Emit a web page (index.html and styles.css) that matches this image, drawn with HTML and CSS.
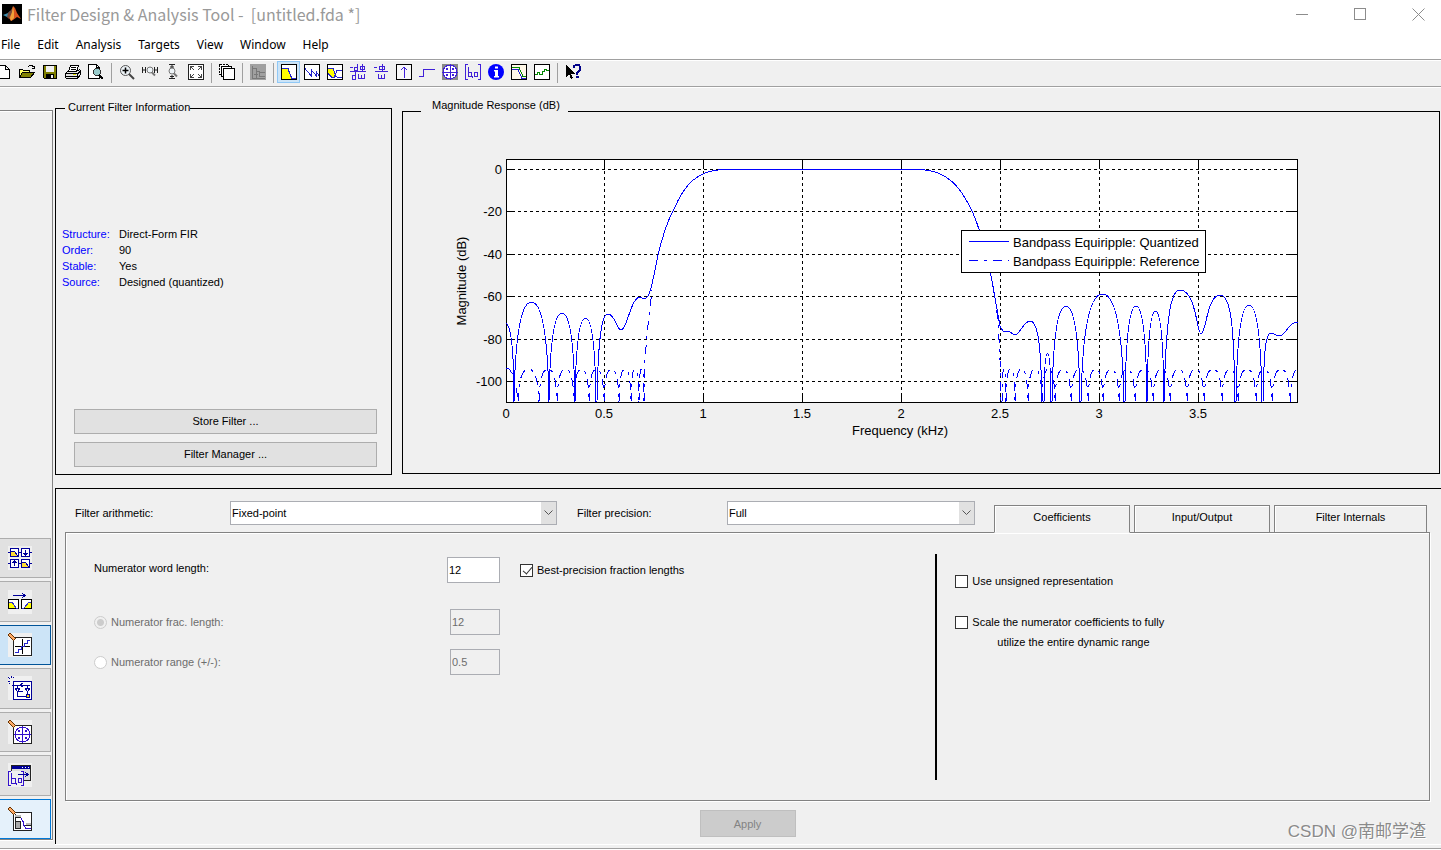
FILE: index.html
```html
<!DOCTYPE html>
<html lang="en">
<head>
<meta charset="utf-8">
<title>Filter Design &amp; Analysis Tool</title>
<link rel="stylesheet" href="styles.css">
</head>
<body>
<div class="app">
  <header class="titlebar">
    <svg class="logo" viewBox="0 0 20 20" aria-hidden="true">
      <rect width="20" height="20" fill="#000"/>
      <path d="M1 11 6 9 8 7 10 9 7 14 5 13z" fill="#3f8fb0"/>
      <path d="M6 9 9 6 11 3 11 9 7 15 5 13z" fill="#7a4a3a"/>
      <path d="M11 2 13 4 15 9 19 15 15 13 11 16 9 17 7 14 10 9z" fill="#d9531e"/>
      <path d="M11 2 12 8 12 14 9 17 8 14 10 8z" fill="#f0a23a"/>
    </svg>
    <h1 class="title">Filter Design &amp; Analysis Tool -&nbsp; [untitled.fda *]</h1>
    <div class="winbtns">
      <button class="winbtn" aria-label="Minimize"><svg viewBox="0 0 13 13"><path d="M0 6.500h12"/></svg></button>
      <button class="winbtn" aria-label="Maximize"><svg viewBox="0 0 13 13"><path d="M.5 .5h11v11H.5z"/></svg></button>
      <button class="winbtn smooth" aria-label="Close"><svg viewBox="0 0 13 13"><path d="M.5 .5l12 12M12.500 .5l-12 12"/></svg></button>
    </div>
  </header>
  <nav class="menubar">
    <button>File</button><button>Edit</button><button>Analysis</button><button>Targets</button><button>View</button><button>Window</button><button>Help</button>
  </nav>
  <div class="toolbar" role="toolbar" aria-label="Tools">
    <button class="tool" aria-label="New"><svg viewBox="0 0 16 16"><path d="M2.500 1.500h7l4 4v9h-11zM9.500 1.500v4h4" fill="#fff" stroke="#000"/></svg></button>
    <button class="tool" aria-label="Open"><svg viewBox="0 0 16 16"><path d="M.5 13.500v-8h3l1 1h6v2" fill="#ff6" stroke="#000"/><path d="M.5 13.500l3-5h12l-4 5z" fill="#808000" stroke="#000"/><path d="M8.500 3.500l2-2h3l1 2M12.500 4.500h3v-3" fill="none" stroke="#000"/></svg></button>
    <button class="tool" aria-label="Save"><svg viewBox="0 0 16 16"><path d="M1.500 1.500h13v13h-12l-1-1z" fill="#808000" stroke="#000"/><path d="M4 2h8v6H4z" fill="#f0f0f0"/><path d="M4 10h8v5H4z"/><path d="M9 11h2v3H9z" fill="#f0f0f0"/></svg></button>
    <button class="tool" aria-label="Print"><svg viewBox="0 0 16 16"><path d="M3.500 7.500l2-6h8l-2 6" fill="#fff" stroke="#000"/><path d="M6 3.500h5M6 5.500h5" stroke="#000"/><path d="M.5 9.500l2-2h9l3-2 1 1v4l-3 4h-11l-1-1z" fill="#e4e4e4" stroke="#000"/><path d="M1 9.500h11M1 12.500h11M12.500 14v-4l3-3" fill="none" stroke="#000"/><path d="M8 10h3v1H8z" fill="#dd0"/></svg></button>
    <button class="tool" aria-label="Print preview"><svg viewBox="0 0 16 16"><path d="M.5 .5h8l3 3v11H.5z" fill="#fff" stroke="#000"/><path d="M8.500 .5v3h3" fill="none" stroke="#000"/><circle cx="9" cy="8" r="3.500" fill="#9cc" stroke="#333"/><path d="M11 11l4 4" stroke="#000" stroke-width="2"/></svg></button>
    <span class="sep"></span>
    <button class="tool" aria-label="Zoom in"><svg class="soft" viewBox="0 0 16 16"><circle cx="6.500" cy="6.500" r="5" fill="#eef4f8" stroke="#555"/><path d="M6.500 3.500v6M3.500 6.500h6" stroke="#000" stroke-width="1.500"/><path d="M10 10l5 5" stroke="#444" stroke-width="2"/></svg></button>
    <button class="tool" aria-label="Zoom X"><svg class="soft" viewBox="0 0 16 16"><path d="M.5 3v6M3.500 3v6M.5 6h3M12.500 3v6M15.500 3v6M12.500 6h3" stroke="#222"/><circle cx="8" cy="6" r="3" fill="#eef4f8" stroke="#777"/><path d="M10 8.500l3 3" stroke="#777" stroke-width="2"/></svg></button>
    <button class="tool" aria-label="Zoom Y"><svg class="soft" viewBox="0 0 16 16"><path d="M4 .5h6M7 0v4M5 3h4M4 14.500h6M7 11v4M5 12.500h4" stroke="#222"/><circle cx="7" cy="7" r="3" fill="#eef4f8" stroke="#777"/><path d="M9 9.500l3 3" stroke="#777" stroke-width="2"/></svg></button>
    <button class="tool" aria-label="Full view"><svg viewBox="0 0 16 16"><path d="M.5 .5h15v15H.5z" fill="#fff" stroke="#222"/><path d="M2.500 6V2.500H6M10 2.500h3.500V6M13.500 10v3.500H10M6 13.500H2.500V10M3 3l3 3M13 3l-3 3M13 13l-3-3M3 13l3-3" fill="none" stroke="#444"/></svg></button>
    <span class="sep"></span>
    <button class="tool" aria-label="New window"><svg viewBox="0 0 16 16"><path d="M.5 .5h9v10h-9z" fill="#fff" stroke="#000" stroke-dasharray="2 1"/><path d="M2.500 2.500h10v10h-10z" fill="#fff" stroke="#000"/><path d="M4.500 4.500h11v11h-11z" fill="#fff" stroke="#000"/></svg></button>
    <span class="sep"></span>
    <button class="tool" aria-label="Specifications" disabled><svg viewBox="0 0 16 16"><path d="M0 0h16v16H0z" fill="#a0a0a0"/><path d="M2.500 14V2M2.500 4.500h4v3h3v5h5M10 8.500h5M6.500 7v7M2 14.500h13M4 10.500h4" fill="none" stroke="#787878"/></svg></button>
    <span class="sep"></span>
    <button class="tool on" aria-label="Magnitude response"><svg viewBox="0 0 16 16"><path d="M.5 .5h15v15H.5z" fill="#fff" stroke="#000"/><path d="M1 5h6l3 10H1z" fill="#ff0"/><path d="M1 4.500h6l1 3 2 5 1 2h4" fill="none" stroke="#22c"/></svg></button>
    <button class="tool" aria-label="Phase response"><svg viewBox="0 0 16 16"><path d="M.5 .5h15v15H.5z" fill="#fff" stroke="#000"/><path d="M1 4.500l6 7V5.500l5 6V7.500l3 4" fill="none" stroke="#22c"/></svg></button>
    <button class="tool" aria-label="Magnitude and phase"><svg viewBox="0 0 16 16"><path d="M.5 .5h15v15H.5z" fill="#fff" stroke="#000"/><path d="M1 5h5l4 8H4L1 10z" fill="#ff0"/><path d="M1 4.500h5l3 8 2 1h4M1 9.500l4 4h2l3-7h5" fill="none" stroke="#22c"/></svg></button>
    <button class="tool" aria-label="Group delay"><svg viewBox="0 0 16 16"><path d="M0 7.500h16M0 3.500h3M7.500 0v6h-3v-3h3M10 2.500h4v3h-4zM12.500 0v7M5.500 8v7h-3v-4h3M8.500 10v4h3v-3v3h3v-4" fill="none" stroke="#4020d8"/></svg></button>
    <button class="tool" aria-label="Phase delay"><svg viewBox="0 0 16 16"><path d="M2 7.500h13M1 3.500h3M6.500 2.500h5v3h-5zM9 0v7M5.500 10v4h3v-3v3h3v-4" fill="none" stroke="#4020d8"/></svg></button>
    <button class="tool" aria-label="Impulse response"><svg viewBox="0 0 16 16"><path d="M.5 .5h15v15H.5z" fill="#f8f8f8" stroke="#000"/><path d="M8 14V3M5 6l3-3 3 3" fill="none" stroke="#4020d8"/></svg></button>
    <button class="tool" aria-label="Step response"><svg viewBox="0 0 16 16"><path d="M0 12.500h4.500v-7H16" fill="none" stroke="#4020d8"/></svg></button>
    <button class="tool" aria-label="Pole zero plot"><svg viewBox="0 0 16 16"><path d="M0 0h16v16H0z" fill="#888"/><circle cx="8" cy="8" r="7" fill="#fff" stroke="#4020d8"/><path d="M8 0v16M0 8h16M4 4l2 2M6 4L4 6M10 4l2 2M12 4l-2 2M4 10l2 2M6 10l-2 2M10 10l2 2M12 10l-2 2" stroke="#4020d8"/></svg></button>
    <button class="tool" aria-label="Filter coefficients"><svg viewBox="0 0 16 16"><path d="M3 .5H.5v15H3M13 .5h2.500v15H13M3.500 3v9h3v-4h-3M9.500 8.500h3v4h-3zM7.500 12v2" fill="none" stroke="#4020d8"/></svg></button>
    <button class="tool" aria-label="Filter information"><svg class="soft" viewBox="0 0 16 16"><circle cx="8" cy="8" r="8" fill="#00f"/><path d="M7 2.500h3v2H7zM6 6h4v6h1v1.500H6V12h1V7.500H6z" fill="#fff"/></svg></button>
    <button class="tool" aria-label="Magnitude estimate"><svg viewBox="0 0 16 16"><path d="M.5 .5h15v15H.5z" fill="#fff8e8" stroke="#000"/><path d="M1 3.500h7l4 9h3" fill="none" stroke="#080"/><path d="M1 5.500h6l4 9h4" fill="none" stroke="#22c"/></svg></button>
    <button class="tool" aria-label="Noise spectrum"><svg viewBox="0 0 16 16"><path d="M.5 .5h15v15H.5z" fill="#fff" stroke="#000"/><path d="M1 10.500h2v-2h2v2h3v-3h2v-2h2v1h3" fill="none" stroke="#080"/></svg></button>
    <span class="sep"></span>
    <button class="tool" aria-label="What's this"><svg viewBox="0 0 16 16"><path d="M1 1v12l3-3 2 5 2-1-2-4h4z"/><path d="M9 4V2l2-1h3l1 2v3l-3 3v2M11 13h3" fill="none" stroke="#008" stroke-width="2"/></svg></button>
  </div>

  <div class="workspace">
    <aside class="sidebar">
      <div class="modes">
        <button class="mode" aria-label="Multirate filter"><svg viewBox="0 0 24 24"><path d="M0 6.500h24M0 17.500h24" stroke="#009"/><path d="M2.500 2.500h8v8h-8zM13.500 2.500h8v8h-8zM2.500 13.500h8v8h-8zM13.500 13.500h8v8h-8z" fill="#fff" stroke="#009"/><path d="M3 5h3l4 5H3zM14 16h3l4 5h-7z" fill="#fd3"/><path d="M17.500 4v5M15.500 7l2 2 2-2M6.500 20v-5M4.500 17l2-2 2 2M3 5h3l4 5M14 16h3l4 5" fill="none" stroke="#009"/></svg></button>
        <button class="mode" aria-label="Transform filter"><svg viewBox="0 0 24 24"><path d="M5 5.500h12M14 3l3 2.500-3 2.500" fill="none" stroke="#009"/><path d="M.5 9.500h10v9H.5zM13.500 9.500h10v9h-10z" fill="#fff" stroke="#000"/><path d="M1 12h3l4 6H1zM23 12h-2l-5 6h7z" fill="#ff0"/><path d="M1 12h3l4 6h2M23 12h-2l-5 6h-2" fill="none" stroke="#33c"/></svg></button>
        <button class="mode selected" aria-label="Set quantization parameters"><svg viewBox="0 0 24 24"><path d="M5.500 4.500h18v18h-18z" fill="#fff" stroke="#222"/><path d="M7 13.500h15M14.500 6v15" stroke="#000"/><path d="M7 19.500h3v-3h3v-3h3v-3h3v-3h3" fill="none" stroke="#22c"/><path d="M1 1l6 6" stroke="#630" stroke-width="4"/><path d="M1.500 1.500l5 5" stroke="#fa6" stroke-width="2"/></svg></button>
        <button class="mode" aria-label="Realize model"><svg viewBox="0 0 24 24"><path d="M5.500 5.500h18v18h-18z" fill="#fff" stroke="#009"/><path d="M4 9.500h18M9.500 10v10h10M9.500 15.500h5M14.500 7l-2 2 2 2M19.500 10v8" fill="none" stroke="#009"/><path d="M7 12h5l-2.500 4zM17 12h5l-2.500 4z" fill="#fff" stroke="#009"/><path d="M18 18h3v3h-3z" fill="#fd0" stroke="#009"/><path d="M0 1l2 2M3 0v2M0 5h2M6 1L5 2M1 8l1-1" stroke="#009"/></svg></button>
        <button class="mode" aria-label="Pole zero editor"><svg viewBox="0 0 24 24"><path d="M5.500 5.500h18v18h-18z" fill="#fff" stroke="#222"/><circle cx="14.500" cy="14.500" r="7.500" fill="none" stroke="#31c"/><path d="M14.500 6v17M6 14.500h17M10 10l2 2M12 10l-2 2M17 10l2 2M19 10l-2 2M10 17l2 2M12 17l-2 2M17 17l2 2M19 17l-2 2" stroke="#31c"/><path d="M1 1l6 6" stroke="#630" stroke-width="4"/><path d="M1.500 1.500l5 5" stroke="#fa6" stroke-width="2"/></svg></button>
        <button class="mode" aria-label="Import filter"><svg viewBox="0 0 24 24"><path d="M3.500 2.500h19v15h-19z" fill="#ddd" stroke="#222"/><path d="M4 3h18v3H4z" fill="#009"/><path d="M14 4h1v1h-1zM17 4h1v1h-1zM20 4h1v1h-1z" fill="#fff"/><path d="M0 8h16v15H0z" fill="#f0f0f0"/><path d="M3 8.500H.5v14H3M13 8.500h2.500v14H13M3.500 10v10h4v-5h-4M10.500 15.500h3v4h-3zM8.500 20v2" fill="none" stroke="#31c"/><path d="M10 11.500h10M17 9l3 2.500-3 2.500" fill="none" stroke="#009"/></svg></button>
        <button class="mode current" aria-label="Design filter"><svg viewBox="0 0 24 24"><path d="M5.500 5.500h18v18h-18z" fill="#fff" stroke="#222"/><path d="M7.500 7v15M7 10.500h6M7.500 14.500h5v7h-5zM17 18.500h6" fill="#aaa" stroke="#222"/><path d="M7 8h6v2H7zM18 16h5v2h-5z" fill="#bbb"/><path d="M13 11.500l2 3 1 4 2 3h5" fill="none" stroke="#31c"/><path d="M1 1l6 6" stroke="#630" stroke-width="4"/><path d="M1.500 1.500l5 5" stroke="#fa6" stroke-width="2"/></svg></button>
      </div>
    </aside>

    <main class="content">
      <div class="top">
        <section class="info">
          <h2 class="caption">Current Filter Information</h2>
          <dl class="facts">
            <dt>Structure:</dt><dd>Direct-Form FIR</dd>
            <dt>Order:</dt><dd>90</dd>
            <dt>Stable:</dt><dd>Yes</dd>
            <dt>Source:</dt><dd>Designed (quantized)</dd>
          </dl>
          <div class="actions">
            <button class="push">Store Filter ...</button>
            <button class="push">Filter Manager ...</button>
          </div>
        </section>
        <section class="plot">
          <h2 class="caption">Magnitude Response (dB)</h2>
          <svg class="chart" viewBox="403 112 1036 361" role="img" aria-label="Magnitude response in dB over frequency in kHz">
            <rect class="area" x="506.500" y="159.500" width="791" height="243"/>
            <path class="grid" d="M506 169.500H1297M506 211.500H1297M506 254.500H1297M506 296.500H1297M506 339.500H1297M506 381.500H1297M604.500 159V402M703.500 159V402M802.500 159V402M901.500 159V402M1000.500 159V402M1099.500 159V402M1198.500 159V402"/>
            <path class="ticks" d="M506 169.500h9M506 211.500h9M506 254.500h9M506 296.500h9M506 339.500h9M506 381.500h9M1297 169.500h-11M1297 211.500h-11M1297 254.500h-11M1297 296.500h-11M1297 339.500h-11M1297 381.500h-11M604.500 159v10M703.500 159v10M802.500 159v10M901.500 159v10M1000.500 159v10M1099.500 159v10M1198.500 159v10M604.500 402v-8M703.500 402v-8M802.500 402v-8M901.500 402v-8M1000.500 402v-8M1099.500 402v-8M1198.500 402v-8"/>
            <path class="curve" id="quantized"/>
            <path class="curve dashdot" id="reference"/>
            <g class="ylabels">
              <text x="502" y="174">0</text><text x="502" y="216">-20</text><text x="502" y="259">-40</text><text x="502" y="301">-60</text><text x="502" y="344">-80</text><text x="502" y="386">-100</text>
            </g>
            <g class="xlabels">
              <text x="506" y="418">0</text><text x="604" y="418">0.5</text><text x="703" y="418">1</text><text x="802" y="418">1.5</text><text x="901" y="418">2</text><text x="1000" y="418">2.5</text><text x="1099" y="418">3</text><text x="1198" y="418">3.5</text>
              <text x="900" y="435">Frequency (kHz)</text>
              <text transform="translate(466 281) rotate(-90)">Magnitude (dB)</text>
            </g>
            <rect class="area" x="961.500" y="230.500" width="244" height="42"/>
            <path class="curve" d="M969 241.500h40"/>
            <path class="curve dashdot" d="M969 260.500h40"/>
            <text x="1013" y="247">Bandpass Equiripple: Quantized</text>
            <text x="1013" y="266">Bandpass Equiripple: Reference</text>
          </svg>
        </section>
      </div>

      <section class="quant">
        <div class="selectors">
          <label for="arith">Filter arithmetic:</label>
          <div class="combo"><select id="arith"><option>Fixed-point</option></select><svg viewBox="0 0 9 6"><path d="M.5 .5l4 4 4-4"/></svg></div>
          <label class="second" for="prec">Filter precision:</label>
          <div class="combo"><select id="prec"><option>Full</option></select><svg viewBox="0 0 9 6"><path d="M.5 .5l4 4 4-4"/></svg></div>
          <div class="tabs" role="tablist">
            <button class="tab active" role="tab" aria-selected="true">Coefficients</button>
            <button class="tab" role="tab">Input/Output</button>
            <button class="tab wide" role="tab">Filter Internals</button>
          </div>
        </div>
        <div class="panel" role="tabpanel">
          <div class="numerics">
            <label class="plain" for="word">Numerator word length:</label>
            <input class="field" id="word" type="text" value="12">
            <label class="choice best"><input type="checkbox" checked> Best-precision fraction lengths</label>
            <label class="choice off"><input type="radio" name="mode" checked disabled> Numerator frac. length:</label>
            <input class="field small" type="text" value="12" aria-label="Numerator frac. length" disabled>
            <span></span>
            <label class="choice off"><input type="radio" name="mode" disabled> Numerator range (+/-):</label>
            <input class="field small" type="text" value="0.5" aria-label="Numerator range" disabled>
            <span></span>
          </div>
          <div class="options">
            <label class="choice"><input type="checkbox"> Use unsigned representation</label>
            <div>
              <label class="choice" for="scale"><input type="checkbox" id="scale"> Scale the numerator coefficients to fully</label>
              <label class="more" for="scale">utilize the entire dynamic range</label>
            </div>
          </div>
        </div>
        <button class="push apply" disabled>Apply</button>
      </section>
    </main>
  </div>
  <footer class="status"></footer>
  <div class="watermark">CSDN @南邮学渣</div>
</div>
<script src="chart.js"></script>
</body>
</html>
```

FILE: styles.css
```css
* { box-sizing: border-box; }
body {
  margin: 0;
  background: #f0f0f0;
  color: #000;
  font: 11px/16px "Liberation Sans", Arial, sans-serif;
}
button, input, select { font: inherit; color: inherit; margin: 0; }
.app { position: relative; display: flex; flex-direction: column; min-height: 100vh; overflow: hidden; }

.titlebar { display: flex; align-items: center; height: 30px; padding: 0 0 2px 2px; background: #fff; }
.logo { width: 20px; height: 20px; margin-right: 5px; flex: none; }
.title { flex: 1; margin: 0; font: 16px/28px "Noto Sans CJK SC", sans-serif; color: #999; white-space: nowrap; }
.winbtns { display: flex; gap: 12px; }
.winbtn { display: flex; align-items: center; justify-content: center; width: 46px; height: 28px; padding: 0; border: 0; background: none; }
.winbtn svg { width: 13px; height: 13px; fill: none; stroke: #8c8c8c; shape-rendering: crispEdges; }
.winbtn.smooth svg { shape-rendering: auto; }

.menubar { display: flex; gap: 1px; height: 29px; padding-top: 1px; background: #fff; }
.menubar button { padding: 0 8px; border: 0; background: none; font: 12px/28px "Noto Sans", sans-serif; }
.menubar button:first-child { padding-left: 1px; }

.toolbar {
  display: flex;
  height: 29px;
  padding-top: 1px;
  border-top: 1px solid #a0a0a0;
  border-bottom: 1px solid #fff;
  box-shadow: inset 0 1px #fff, inset 0 -1px #a0a0a0;
}
.tool { display: flex; flex: none; align-items: center; justify-content: center; width: 23px; height: 22px; padding: 0; border: 1px solid transparent; background: none; }
.tool:first-child { margin-left: -8px; }
.tool.on { background: #cce4f7; border-color: #90c8f6; }
.tool svg { width: 16px; height: 16px; flex: none; shape-rendering: crispEdges; }
.tool svg.soft { shape-rendering: auto; }
.sep { flex: none; width: 8px; height: 20px; margin-top: 2px; background: linear-gradient(#a0a0a0, #a0a0a0) 4px 0 / 1px 100% no-repeat; }

.workspace { display: flex; flex: 1; }
.sidebar {
  display: flex;
  flex: none;
  align-items: flex-end;
  width: 53px;
  margin: 22px 0 8px;
  border: solid #828282;
  border-width: 1px 1px 1px 0;
  box-shadow: inset 0 1px #fff, 0 1px #fff;
}
.modes { display: flex; flex-direction: column; gap: 3px; width: 51px; height: 301px; }
.mode { display: flex; flex: 1; align-items: center; padding: 0 0 0 8px; border: 1px solid #adadad; border-left: 0; background: #e1e1e1; }
.mode svg { width: 24px; height: 24px; background: #f0f0f0; shape-rendering: crispEdges; }
.mode.selected { background: #cce4f7; border-color: #005499; }
.mode.current { background: #e5f1fb; border-color: #0078d7; }
.mode.current svg { background: none; }

.content { display: flex; flex: 1; flex-direction: column; min-width: 0; padding-left: 2px; }
.top { display: grid; grid-template-columns: 337fr 1038fr; gap: 10px; padding: 20px 1px 13px 0; }
.info, .plot { position: relative; border: 1px solid #000; }
.info { display: flex; flex-direction: column; padding: 117px 14px 7px 6px; }
.plot { margin: 3px 0 1px; }
.caption { position: absolute; top: -10px; left: 9px; margin: 0; padding: 0 0 0 3px; background: #f0f0f0; font: 11px/16px "Liberation Sans", Arial, sans-serif; white-space: nowrap; }
.plot .caption { top: -15px; left: 18px; padding: 0 8px 0 11px; }
.facts { display: grid; grid-template-columns: 57px 1fr; margin: 0; }
.facts dt { color: #00f; }
.facts dd { margin: 0; }
.actions { display: flex; flex-direction: column; gap: 8px; margin: auto 0 0 12px; }
.push { height: 25px; padding: 0 0 2px; border: 1px solid #adadad; background: #e1e1e1; }

.chart { display: block; width: 100%; height: auto; font-size: 13px; }
.area { fill: #fff; stroke: #000; shape-rendering: crispEdges; }
.grid { fill: none; stroke: #000; stroke-dasharray: 3 3; shape-rendering: crispEdges; }
.ticks { fill: none; stroke: #000; shape-rendering: crispEdges; }
.curve { fill: none; stroke: #00f; shape-rendering: crispEdges; }
.dashdot { stroke-dasharray: 9 6 3 6; }
.ylabels { text-anchor: end; }
.xlabels { text-anchor: middle; }

.quant { display: flex; flex: 1; flex-direction: column; margin-bottom: 4px; padding: 0 11px 7px 9px; border: solid #000; border-width: 1px 0 0 1px; box-shadow: 0 1px #fff; }
.selectors { display: grid; grid-template-columns: 155px 327fr 170px 248fr 452px; align-items: center; height: 44px; margin: 0 3px -1px 10px; padding-top: 3px; }
.selectors .second { padding-left: 20px; }
.combo { position: relative; }
.combo select { display: block; width: 100%; height: 24px; padding: 0 1px; border: 1px solid #abadb3; border-radius: 0; appearance: none; background: linear-gradient(#e1e1e1, #e1e1e1) right / 15px 100% no-repeat #fff; }
.combo svg { position: absolute; top: 9px; right: 4px; width: 9px; height: 6px; fill: none; stroke: #555; pointer-events: none; }
.tabs { position: relative; display: flex; gap: 4px; align-self: end; padding-left: 19px; }
.tab { width: 136px; height: 28px; padding: 0 0 5px; border: 1px solid #828282; background: #f0f0f0; box-shadow: inset 1px 1px #fff; }
.tab.wide { width: 153px; }
.tab.active { border-bottom-color: #f0f0f0; }
.panel { display: grid; grid-template-columns: 870fr 494fr; flex: 1; border: 1px solid #828282; box-shadow: inset 1px 1px #fff, 1px 1px #fff; }
.numerics { display: grid; grid-template-columns: 353px 53px auto; grid-template-rows: 26px 26px 26px; row-gap: 14px; align-content: start; align-items: center; padding: 24px 0 0 28px; }
.numerics > :nth-child(-n+3) { margin-bottom: 0; }
.numerics { grid-template-rows: 38px 26px 26px; }
.numerics > :nth-child(-n+3) { align-self: start; }
.plain { padding-top: 3px; }
.field { width: 53px; height: 26px; padding: 0 1px; border: 1px solid #abadb3; background: #fff; }
.field.small { width: 50px; margin-left: 3px; background: #f0f0f0; }
.field:disabled, .choice.off { color: #6d6d6d; }
.choice { display: flex; align-items: center; gap: 4px; }
.best { margin-left: 20px; padding-top: 5px; }
.choice input { position: relative; flex: none; width: 13px; height: 13px; appearance: none; border: 1px solid #333; background: #fff; }
.choice input[type="radio"] { border-color: #ccc; border-radius: 50%; }
.choice input[type="radio"]:checked { background: radial-gradient(#ccc 0 3px, #f0f0f0 4px); }
.choice input[type="checkbox"]:checked::after { content: ""; position: absolute; left: 4px; top: 0; width: 4px; height: 8px; border: solid #333; border-width: 0 1px 1px 0; transform: rotate(40deg); }
.options { display: flex; flex-direction: column; gap: 25px; margin: 21px 0 20px; padding: 19px 0 0 18px; border-left: 2px solid #000; }
.more { display: block; margin: 4px 0 0 42px; }
.apply { align-self: center; width: 96px; height: 27px; margin-top: 9px; padding-bottom: 0; border-color: #bfbfbf; background: #ccc; color: #838383; }

.status { height: 2px; border-top: 1px solid #a0a0a0; background: #fff; }
.watermark { position: absolute; right: 15px; bottom: 6px; color: #8a8a8a; font: 17px/24px "Liberation Sans", "Noto Sans CJK SC", sans-serif; text-shadow: 1px 1px #fff; }
```

FILE: chart.js
```js
const FLOOR = 402;

// One stopband lobe between two nulls, rounded at its top.
function lobe(x0, x1, top) {
  const w = x1 - x0, mid = (x0 + x1) / 2, knee = top + (FLOOR - top) * 0.18;
  return `M${x0} ${FLOOR}C${x0 + w * 0.04} ${knee} ${x0 + w * 0.27} ${top} ${mid} ${top}` +
    `C${x1 - w * 0.27} ${top} ${x1 - w * 0.04} ${knee} ${x1} ${FLOOR}`;
}

function lobes(list) {
  return list.map(([a, b, top]) => lobe(a, b, top)).join('');
}

const quantized =
  'M506 323C511 326 514 345 514 402' +
  lobes([[514, 549, 302], [549, 575, 313], [575, 596, 318]]) +
  'M597 402C598 336 602 314 608 314C615 314 617 330 621 330C627 330 631 297 640 297L642 298 646 298' +
  'C650 297 653 280 658 255C662 238 668 220 674 209C684 186 696 170 724 169.500H920' +
  'C948 170 961 188 972 211C982 232 988 262 992 281L1000 326 1003 331H1008L1015 335' +
  'C1020 334 1024 321 1030 321C1038 321 1041 345 1042 402' +
  lobes([[1044, 1051, 353], [1052, 1080, 306], [1081, 1124, 294], [1125, 1147, 306], [1147, 1164, 311]]) +
  'M1164 402C1166 314 1171 290 1180 290C1196 290 1197 334 1201 334C1206 334 1207 295 1220 295C1231 295 1234 325 1235 402' +
  lobes([[1236, 1262, 305]]) +
  'M1263 402C1264 346 1266 333 1271 333C1275 333 1276 336 1279 336C1286 336 1288 322 1298 322';

const left = [518, 539, 557, 574, 589, 604, 619, 631, 639, 644];
const right = [1002, 1006, 1015, 1028, 1042, 1055, 1071, 1088, 1103, 1119, 1135, 1153, 1170, 1187, 1204, 1222, 1238, 1256, 1272, 1290];

function ripple(nulls) {
  return nulls.slice(1).map((x, i) => lobe(nulls[i], x, 369)).join('');
}

const reference =
  'M506 368C512 368 516 380 518 402' + ripple(left) +
  'M644 402L645 358 648 325 652 290M993 286L998 320 1000 360 1001 402' +
  ripple(right) + 'M1290 402C1291 378 1294 369 1298 369';

document.getElementById('quantized').setAttribute('d', quantized);
document.getElementById('reference').setAttribute('d', reference);
```
